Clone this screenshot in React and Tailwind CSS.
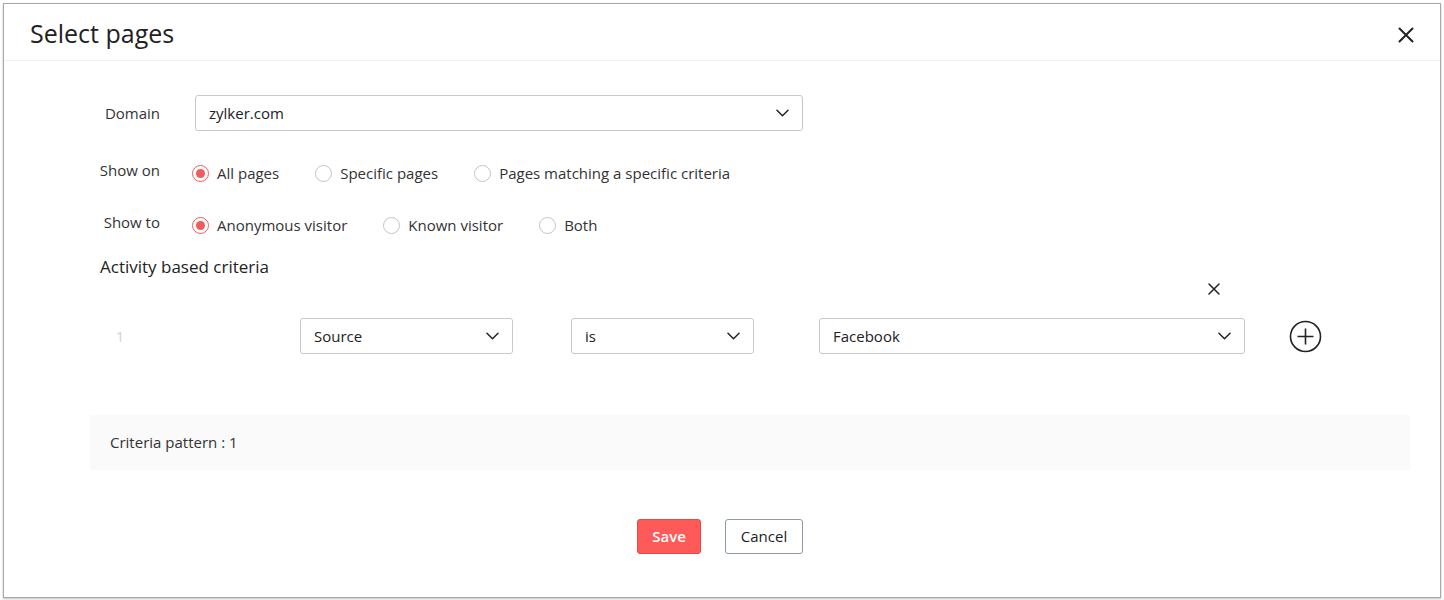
import React from "react";

const Chevron = () => (
  <svg width="13" height="8" viewBox="0 0 13 8" fill="none" className="shrink-0">
    <path d="M1 1.2l5.5 5.5 5.5-5.5" stroke="#222" strokeWidth="1.5" strokeLinecap="round" strokeLinejoin="round" />
  </svg>
);

const Select = ({ value, className }) => (
  <div className={`flex h-[36px] items-center justify-between rounded-[3px] border border-[#c8c8c8] bg-white pl-[13px] pr-[13px] ${className}`}>
    <span className="text-[15px] text-[#222]">{value}</span>
    <Chevron />
  </div>
);

const Radio = ({ checked, label, className = "" }) => (
  <div className={`flex items-center ${className}`}>
    {checked ? (
      <span className="flex h-[17px] w-[17px] items-center justify-center rounded-full border-[1.5px] border-[#f25b5b]">
        <span className="h-[9px] w-[9px] rounded-full bg-[#f25b5b]" />
      </span>
    ) : (
      <span className="h-[17px] w-[17px] rounded-full border-[1.5px] border-[#c4c4c4]" />
    )}
    <span className="ml-[8px] text-[15px] text-[#333]">{label}</span>
  </div>
);

export default function App() {
  return (
    <div className="h-[600px] w-[1444px] bg-white p-[3px]" style={{ fontFamily: '"Open Sans", "Noto Sans", sans-serif' }}>
      <div className="flex h-[595px] w-[1438px] flex-col border border-[#a8a8a8] bg-white shadow-[0_1px_2px_rgba(0,0,0,0.25)]">
        {/* header */}
        <div className="flex h-[57px] items-center justify-between border-b border-[#f0f0f0] pl-[26px] pr-[26px]">
          <span className="pt-[3px] text-[25px] text-[#222]">Select pages</span>
          <svg width="16" height="16" viewBox="0 0 16 16" className="mt-[6px]">
            <path d="M1.5 1.5l13 13M14.5 1.5l-13 13" stroke="#222" strokeWidth="2" strokeLinecap="round" />
          </svg>
        </div>

        {/* body */}
        <div className="flex flex-col pl-[86px]">
          <div className="mt-[34px] flex items-center">
            <span className="w-[70px] text-right text-[15px] text-[#333]">Domain</span>
            <Select value="zylker.com" className="ml-[35px] w-[608px]" />
          </div>

          <div className="mt-[32px] flex h-[20px] items-center">
            <span className="-mt-[6px] w-[70px] text-right text-[15px] text-[#333]">Show on</span>
            <Radio checked label="All pages" className="ml-[32px]" />
            <Radio label="Specific pages" className="ml-[36px]" />
            <Radio label="Pages matching a specific criteria" className="ml-[36px]" />
          </div>

          <div className="mt-[32px] flex h-[20px] items-center">
            <span className="-mt-[6px] w-[70px] text-right text-[15px] text-[#333]">Show to</span>
            <Radio checked label="Anonymous visitor" className="ml-[32px]" />
            <Radio label="Known visitor" className="ml-[36px]" />
            <Radio label="Both" className="ml-[36px]" />
          </div>

          <div className="mt-[20px] ml-[10px] text-[17px] leading-[24px] text-[#222]">Activity based criteria</div>

          <div className="mt-[2px] flex h-[16px] w-[1154px] items-center justify-end pr-[24px]">
            <svg width="12" height="12" viewBox="0 0 12 12">
              <path d="M1 1l10 10M11 1L1 11" stroke="#222" strokeWidth="1.5" strokeLinecap="round" />
            </svg>
          </div>

          <div className="mt-[21px] flex items-center">
            <span className="ml-[26px] w-[184px] text-[14px] text-[#cfcfcf]">1</span>
            <Select value="Source" className="w-[213px]" />
            <Select value="is" className="ml-[58px] w-[183px]" />
            <Select value="Facebook" className="ml-[65px] w-[426px]" />
            <svg width="33" height="33" viewBox="0 0 33 33" className="ml-[44px]">
              <circle cx="16.5" cy="16.5" r="15" fill="none" stroke="#222" strokeWidth="1.6" />
              <path d="M16.5 8.5v16M8.5 16.5h16" stroke="#222" strokeWidth="1.6" />
            </svg>
          </div>

          <div className="mt-[61px] flex h-[55px] w-[1320px] items-center bg-[#fafafa] pl-[20px] text-[15px] text-[#333]">
            Criteria pattern : 1
          </div>
        </div>

        <div className="mt-[49px] flex justify-center pr-[4px]">
          <div className="flex items-center gap-[24px]">
            <button className="h-[35px] w-[64px] rounded-[3px] border border-[#ef4444] bg-[#ff5a5a] text-[15px] font-semibold text-white">Save</button>
            <button className="h-[35px] w-[78px] rounded-[3px] border border-[#8e99a8] bg-white text-[15px] text-[#222]">Cancel</button>
          </div>
        </div>
      </div>
    </div>
  );
}
